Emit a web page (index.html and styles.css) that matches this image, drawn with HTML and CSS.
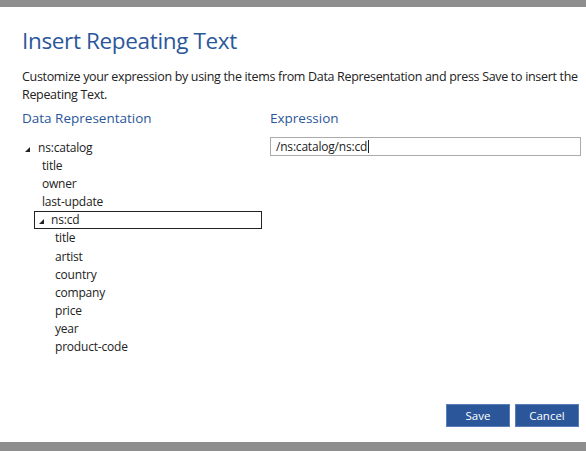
FILE: index.html
```html
<!DOCTYPE html>
<html>
<head>
<meta charset="utf-8">
<link rel="stylesheet" href="styles.css">
</head>
<body>
<div class="frame">
  <div class="bar-top"></div>
  <main class="dialog">
    <h1 class="title">Insert Repeating Text</h1>
    <p class="desc">Customize your expression by using the items from Data Representation and press Save to insert the Repeating Text.</p>
    <div class="columns">
      <section class="col-left">
        <h2 class="section-head">Data Representation</h2>
        <ul class="tree">
          <li class="node root"><span class="tri"></span><span>ns:catalog</span></li>
          <li class="leaf l1">title</li>
          <li class="leaf l1">owner</li>
          <li class="leaf l1">last-update</li>
          <li class="node sub selected"><span class="tri"></span><span>ns:cd</span></li>
          <li class="leaf l2">title</li>
          <li class="leaf l2">artist</li>
          <li class="leaf l2">country</li>
          <li class="leaf l2">company</li>
          <li class="leaf l2">price</li>
          <li class="leaf l2">year</li>
          <li class="leaf l2">product-code</li>
        </ul>
      </section>
      <section class="col-right">
        <h2 class="section-head">Expression</h2>
        <div class="input"><span>/ns:catalog/ns:cd</span><span class="caret"></span></div>
      </section>
    </div>
    <div class="actions">
      <button class="btn">Save</button>
      <button class="btn">Cancel</button>
    </div>
  </main>
  <div class="bar-bottom"></div>
</div>
</body>
</html>
```
FILE: styles.css
```css
* { box-sizing: border-box; }
html, body { margin: 0; padding: 0; background: #fff; }
body {
  font-family: "Open Sans", "Noto Sans", "Liberation Sans", sans-serif;
  color: #222;
}
.frame {
  width: 586px;
  height: 451px;
  display: flex;
  flex-direction: column;
  overflow: hidden;
}
.bar-top { height: 7px; background: #8e8e8e; flex: none; }
.bar-bottom { height: 9px; background: #8e8e8e; flex: none; }
.dialog {
  flex: 1;
  display: flex;
  flex-direction: column;
  padding: 0 5px 0 22px;
}
.title {
  margin: 19px 0 0 0;
  font-weight: 400;
  font-size: 22.5px;
  line-height: 30px;
  color: #2b579a;
  letter-spacing: -0.35px;
}
.desc {
  margin: 12px 0 0 0;
  font-size: 12.5px;
  line-height: 18px;
  color: #222;
  letter-spacing: -0.32px;
  width: 560px;
}
.columns {
  display: flex;
  margin-top: 4px;
}
.col-left { width: 248px; flex: none; }
.col-right { flex: 1; }
.section-head {
  margin: 0;
  font-weight: 400;
  font-size: 13.5px;
  line-height: 20px;
  color: #2b579a;
}
.tree {
  list-style: none;
  margin: 12px 0 0 0;
  padding: 0;
  font-size: 12px;
  color: #222;
  letter-spacing: -0.2px;
}
.tree li {
  height: 18.2px;
  line-height: 18px;
  display: flex;
  align-items: center;
  white-space: nowrap;
}
.tree .root { height: 16.5px; }
.tri {
  width: 0; height: 0;
  border-left: 5px solid transparent;
  border-bottom: 5px solid #222;
  margin-right: 8px;
  margin-top: 2px;
}
.root { padding-left: 3px; }
.l1 { padding-left: 20px; }
.l2 { padding-left: 33px; }
.sub {
  margin-left: 12px;
  width: 228px;
  padding-left: 4px;
  border: 1px solid #222;
}
.sub .tri { margin-right: 7px; }
.input {
  margin-top: 9px;
  height: 19px;
  border: 1px solid #ababab;
  padding: 0 5px;
  font-size: 12px;
  line-height: 17px;
  color: #222;
  display: flex;
  align-items: center;
  letter-spacing: -0.2px;
}
.caret {
  width: 1px; height: 13px; background: #222; margin-left: 1px;
}
.actions {
  margin-top: auto;
  margin-bottom: 15px;
  display: flex;
  justify-content: flex-end;
  gap: 5px;
  padding-right: 2px;
}
.btn {
  width: 64px;
  height: 23px;
  background: #2b579a;
  border: 1px solid #5a7fb8;
  color: #fff;
  font-family: inherit;
  font-size: 11.5px;
  padding: 0;
  cursor: pointer;
}
```
